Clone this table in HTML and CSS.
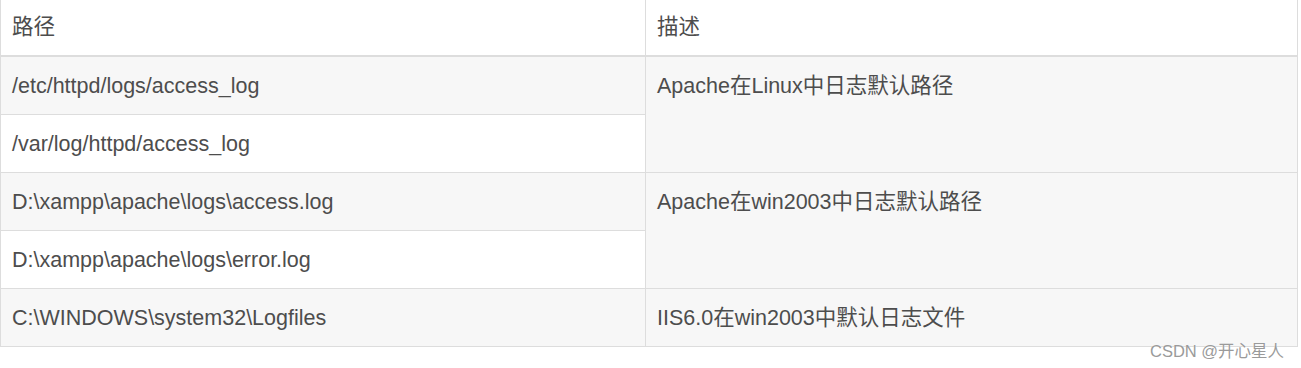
FILE: index.html
```html
<!DOCTYPE html>
<html lang="zh">
<head>
<meta charset="utf-8">
<link rel="stylesheet" href="styles.css">
</head>
<body>
<div class="wrap">
  <table class="logs">
    <thead>
      <tr><th class="c1">路径</th><th class="c2">描述</th></tr>
    </thead>
    <tbody>
      <tr class="odd"><td>/etc/httpd/logs/access_log</td><td rowspan="2">Apache在Linux中日志默认路径</td></tr>
      <tr class="even"><td>/var/log/httpd/access_log</td></tr>
      <tr class="odd"><td>D:\xampp\apache\logs\access.log</td><td rowspan="2">Apache在win2003中日志默认路径</td></tr>
      <tr class="even"><td>D:\xampp\apache\logs\error.log</td></tr>
      <tr class="odd"><td>C:\WINDOWS\system32\Logfiles</td><td>IIS6.0在win2003中默认日志文件</td></tr>
    </tbody>
  </table>
  <div class="mark">CSDN @开心星人</div>
</div>
</body>
</html>
```

FILE: styles.css
```css
html, body {
  margin: 0;
  padding: 0;
  background: #fff;
}
.wrap {
  position: relative;
  width: 1301px;
  height: 368px;
}
.logs {
  border-collapse: collapse;
  width: 1298px;
  table-layout: fixed;
  font-family: "Liberation Sans", "Noto Sans CJK SC", sans-serif;
  font-size: 21.5px;
  color: #4d4d4d;
}
.logs th, .logs td {
  text-align: left;
  font-weight: normal;
  vertical-align: top;
  line-height: 30px;
  padding: 14px 11px 13px 11px;
  border: 1px solid #ddd;
}
.logs th {
  border-top: none;
  border-bottom: 2px solid #ddd;
  padding-top: 12px;
  padding-bottom: 13px;
}
.logs .c1 { width: 622px; }
.logs tr.odd { background: #f7f7f7; }
.logs tr.even { background: #fff; }
.mark {
  position: absolute;
  left: 1150px;
  top: 338px;
  font-family: "Liberation Sans", "Noto Sans CJK SC", sans-serif;
  font-size: 16.5px;
  color: #9a9a9a;
  text-shadow: 0 0 1px #fff;
}
```
